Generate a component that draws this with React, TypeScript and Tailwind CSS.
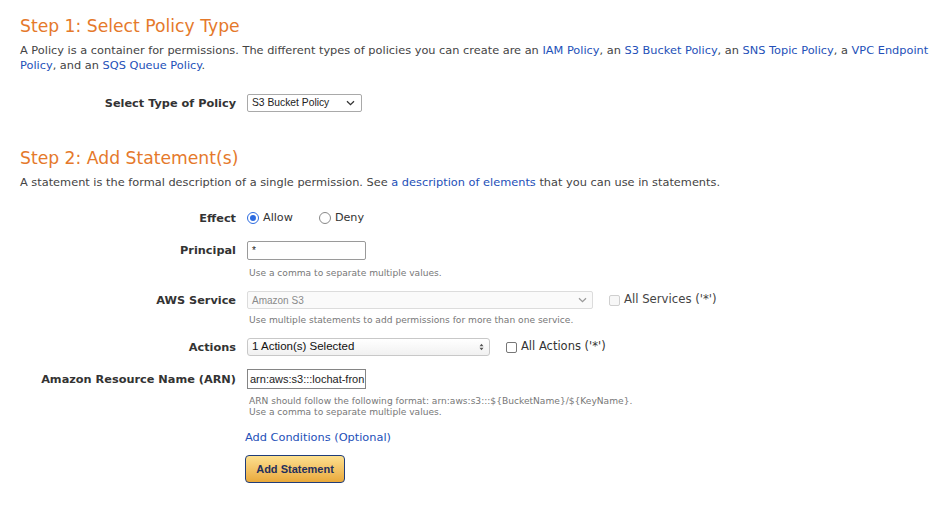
import React from "react";

const Chevron = ({ className }: { className?: string }) => (
  <svg width="9" height="6" viewBox="0 0 9 6" className={className}>
    <path d="M1 1.2 L4.5 4.6 L8 1.2" fill="none" stroke="currentColor" strokeWidth="1.3" />
  </svg>
);

const UpDown = () => (
  <svg width="5" height="8" viewBox="0 0 5 8" className="text-[#555]">
    <path d="M0.5 3.2 L2.5 0.8 L4.5 3.2 Z M0.5 4.8 L2.5 7.2 L4.5 4.8 Z" fill="currentColor" />
  </svg>
);

function Label({ children }: { children: React.ReactNode }) {
  return (
    <div className="w-[216px] shrink-0 text-right font-bold text-[11.3px] leading-[15px] text-[#333]">
      {children}
    </div>
  );
}

function Hint({ children }: { children: React.ReactNode }) {
  return <div className="pl-[229px] text-[9.1px] leading-[11px] text-[#777]">{children}</div>;
}

const A = ({ children }: { children: React.ReactNode }) => (
  <span className="text-[#2350b8]">{children}</span>
);

export default function App() {
  return (
    <div className="w-[936px] h-[513px] overflow-hidden bg-white pl-[20px] pr-[2px] pt-[15px] font-['DejaVu_Sans',Verdana,sans-serif] text-[#444]">
      <h1 className="text-[17.2px] leading-[22px] text-[#e5792b]">Step 1: Select Policy Type</h1>
      <p className="mt-[6px] text-[11.35px] leading-[15px]">
        A Policy is a container for permissions. The different types of policies you can create are an{" "}
        <A>IAM Policy</A>, an <A>S3 Bucket Policy</A>, an <A>SNS Topic Policy</A>, a <A>VPC Endpoint</A>
        <br />
        <A>Policy</A>, and an <A>SQS Queue Policy</A>.
      </p>

      <div className="mt-[21px] flex items-center h-[18px]">
        <Label>Select Type of Policy</Label>
        <div className="ml-[11px] w-[115px] h-[18px] border border-[#a9a9a9] rounded-[2px] bg-white flex items-center justify-between pl-[4px] pr-[6px] font-['Liberation_Sans',Arial,sans-serif] text-[10.3px] text-[#222]">
          <span>S3 Bucket Policy</span>
          <Chevron className="text-[#333]" />
        </div>
      </div>

      <h1 className="mt-[35px] text-[17.2px] leading-[22px] text-[#e5792b]">Step 2: Add Statement(s)</h1>
      <p className="mt-[6px] text-[11.35px] leading-[15px]">
        A statement is the formal description of a single permission. See <A>a description of elements</A> that you can
        use in statements.
      </p>

      <div className="mt-[20px] flex items-center h-[16px]">
        <Label>Effect</Label>
        <div className="ml-[11px] flex items-center text-[11.2px] text-[#333]">
          <span className="w-[12px] h-[12px] rounded-full border-[1.5px] border-[#2c6be0] bg-white flex items-center justify-center">
            <span className="w-[6px] h-[6px] rounded-full bg-[#2c6be0]" />
          </span>
          <span className="ml-[4px]">Allow</span>
          <span className="ml-[26px] w-[12px] h-[12px] rounded-full border border-[#888] bg-white" />
          <span className="ml-[4px]">Deny</span>
        </div>
      </div>

      <div className="mt-[15px] flex items-center h-[19px]">
        <Label>Principal</Label>
        <div className="ml-[11px] w-[119px] h-[19px] border border-[#9a9a9a] rounded-[2px] bg-white flex items-center pl-[4px] font-['Liberation_Sans',Arial,sans-serif] text-[10px] text-[#222]">
          *
        </div>
      </div>
      <div className="mt-[8px]">
        <Hint>Use a comma to separate multiple values.</Hint>
      </div>

      <div className="mt-[12px] flex items-center h-[18px]">
        <Label>AWS Service</Label>
        <div className="ml-[11px] w-[346px] h-[18px] border border-[#dcdcdc] rounded-[2px] bg-[#fafafa] flex items-center justify-between pl-[4px] pr-[5px] font-['Liberation_Sans',Arial,sans-serif] text-[10px] text-[#8a8a8a]">
          <span>Amazon S3</span>
          <Chevron className="text-[#9a9a9a]" />
        </div>
        <span className="ml-[16px] w-[11px] h-[11px] rounded-[2px] border border-[#cfcfcf] bg-[#f7f7f7]" />
        <span className="ml-[4px] text-[11.7px] text-[#444]">All Services ('*')</span>
      </div>
      <div className="mt-[6px]">
        <Hint>Use multiple statements to add permissions for more than one service.</Hint>
      </div>

      <div className="mt-[12px] flex items-center h-[18px]">
        <Label>Actions</Label>
        <div className="ml-[11px] w-[243px] h-[18px] border border-[#c8c8c8] rounded-[3px] bg-gradient-to-b from-white to-[#f1f1f1] flex items-center justify-between pl-[4px] pr-[5px] font-['Liberation_Sans',Arial,sans-serif] text-[11.5px] text-[#111]">
          <span>1 Action(s) Selected</span>
          <UpDown />
        </div>
        <span className="ml-[16px] w-[11px] h-[11px] rounded-[2px] border border-[#777] bg-white" />
        <span className="ml-[4px] text-[11.5px] text-[#333]">All Actions ('*')</span>
      </div>

      <div className="mt-[13px] flex items-center h-[20px]">
        <Label>Amazon Resource Name (ARN)</Label>
        <div className="ml-[11px] w-[119px] h-[20px] border border-[#858585] bg-white flex items-center pl-[2px] overflow-hidden whitespace-nowrap font-['Liberation_Sans',Arial,sans-serif] text-[11px] text-[#222]">
          arn:aws:s3:::lochat-fron
        </div>
      </div>
      <div className="mt-[7px]">
        <Hint>
          ARN should follow the following format: arn:aws:s3:::${"{"}BucketName{"}"}/${"{"}KeyName{"}"}.
          <br />
          Use a comma to separate multiple values.
        </Hint>
      </div>

      <div className="mt-[12px] pl-[225px] text-[11.35px] leading-[15px] text-[#2350b8]">Add Conditions (Optional)</div>

      <div className="mt-[10px] pl-[225px]">
        <button className="w-[100px] h-[28px] rounded-[4px] border-[1.5px] border-[#203d7a] bg-gradient-to-b from-[#fde08e] to-[#e9a93a] font-['Liberation_Sans',Arial,sans-serif] text-[11px] font-bold text-[#1f2f5c]">
          Add Statement
        </button>
      </div>
    </div>
  );
}
